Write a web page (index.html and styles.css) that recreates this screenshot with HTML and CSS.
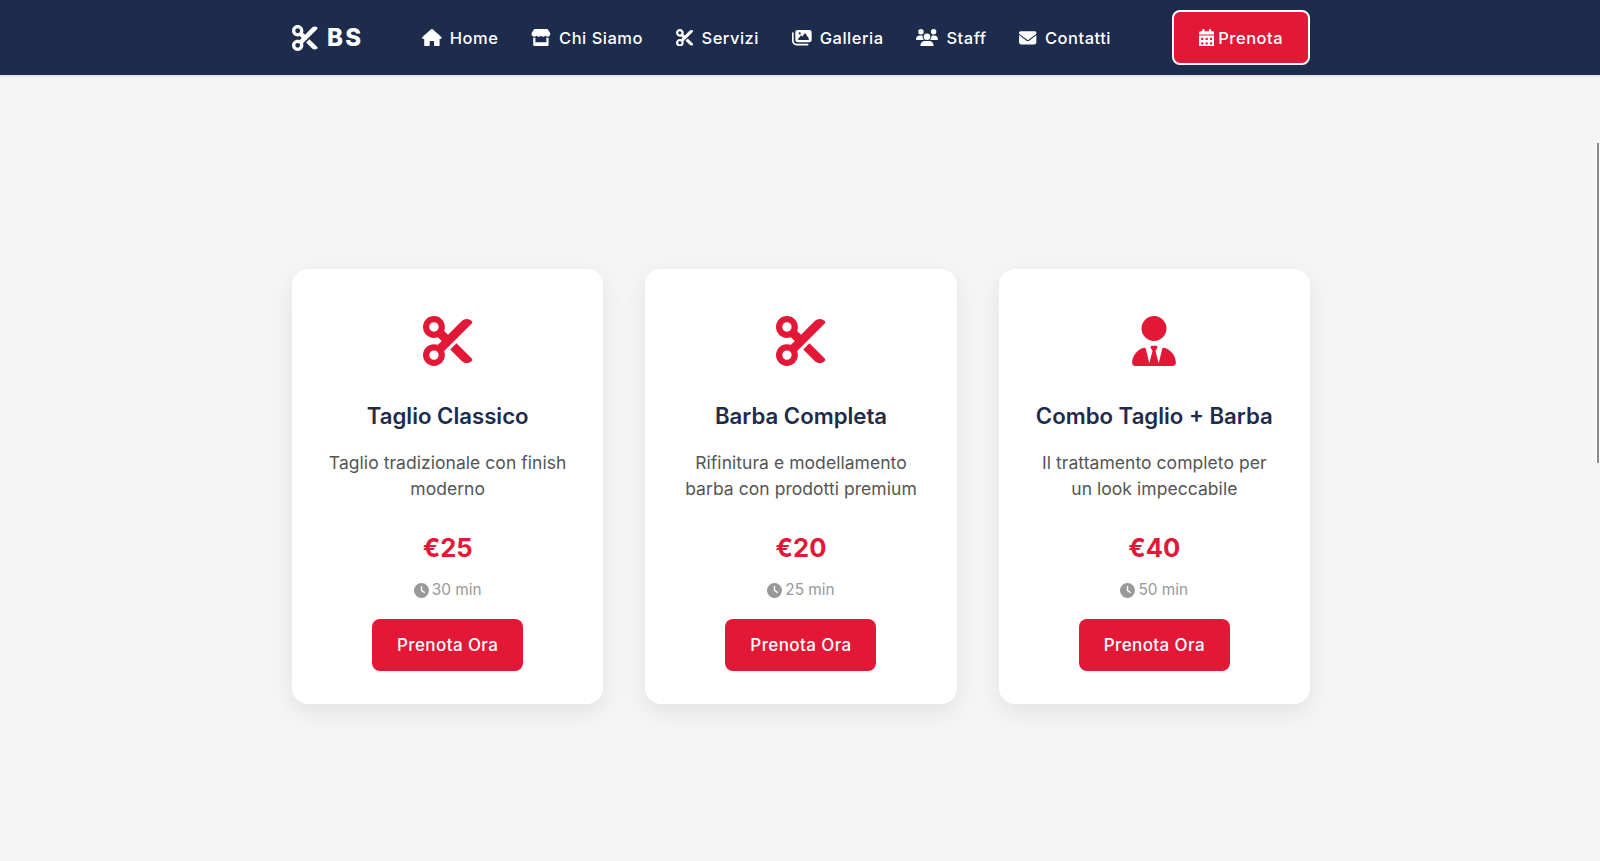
FILE: index.html
```html
<!DOCTYPE html>
<html lang="it">
<head>
  <meta charset="UTF-8">
  <title>BS Barber Shop</title>
  <link rel="stylesheet" href="styles.css">
</head>
<body>

  <svg class="sprite" xmlns="http://www.w3.org/2000/svg">
    <symbol id="i-cut" viewBox="0 0 512 512"><path d="M256 192l-39.5-39.5c4.9-12.6 7.5-26.2 7.5-40.5C224 50.1 173.9 0 112 0S0 50.1 0 112s50.1 112 112 112c14.3 0 27.9-2.7 40.5-7.5L192 256l-39.5 39.5c-12.6-4.9-26.2-7.5-40.5-7.5C50.1 288 0 338.1 0 400s50.1 112 112 112s112-50.1 112-112c0-14.3-2.7-27.9-7.5-40.5L499.2 76.8c7.1-7.1 7.1-18.5 0-25.6c-28.3-28.3-74.1-28.3-102.4 0L256 192zm22.6 150.6L396.8 460.8c28.3 28.3 74.1 28.3 102.4 0c7.1-7.1 7.1-18.5 0-25.6L342.6 278.6l-64 64zM64 112a48 48 0 1 1 96 0 48 48 0 1 1 -96 0zm48 240a48 48 0 1 1 0 96 48 48 0 1 1 0-96z"/></symbol>
    <symbol id="i-home" viewBox="0 0 576 512"><path d="M575.8 255.5c0 18-15 32.1-32 32.1h-32l.7 160.2c0 2.7-.2 5.4-.5 8.1V472c0 22.1-17.9 40-40 40H456c-1.1 0-2.2 0-3.3-.1c-1.4 .1-2.8 .1-4.2 .1H416 392c-22.1 0-40-17.9-40-40V448 384c0-17.7-14.3-32-32-32H256c-17.7 0-32 14.3-32 32v64 24c0 22.1-17.9 40-40 40H160 128.1c-1.5 0-3-.1-4.5-.2c-1.2 .1-2.4 .2-3.6 .2H104c-22.1 0-40-17.9-40-40V360c0-.9 0-1.9 .1-2.8V287.6H32c-18 0-32-14-32-32.1c0-9 3-17 10-24L266.4 8c7-7 15-8 22-8s15 2 21 7L564.8 231.5c8 7 12 15 11 24z"/></symbol>
    <symbol id="i-store" viewBox="0 0 576 512"><path d="M547.6 103.8L490.3 13.1C485.2 5 476.1 0 466.4 0H109.6C99.9 0 90.8 5 85.7 13.1L28.3 103.8c-29.6 46.8-3.4 111.9 51.9 119.4c4 .5 8.1 .8 12.1 .8c26.1 0 49.3-11.4 65.2-29c15.9 17.6 39.1 29 65.2 29c26.1 0 49.3-11.4 65.2-29c15.9 17.6 39.1 29 65.2 29c26.2 0 49.3-11.4 65.2-29c16 17.6 39.1 29 65.2 29c4.1 0 8.1-.3 12.1-.8c55.5-7.4 81.8-72.5 52.1-119.4zM499.7 254.9l-.1 0c-5.3 .7-10.7 1.1-16.2 1.1c-12.4 0-24.3-1.9-35.4-5.3V384H128V250.6c-11.2 3.5-23.2 5.4-35.6 5.4c-5.5 0-11-.4-16.3-1.1l-.1 0c-4.1-.6-8.1-1.3-12-2.3V384v64c0 35.3 28.7 64 64 64H448c35.3 0 64-28.7 64-64V384 252.6c-4 1-8 1.8-12.3 2.3z"/></symbol>
    <symbol id="i-images" viewBox="0 0 576 512"><path d="M160 32c-35.3 0-64 28.7-64 64V320c0 35.3 28.7 64 64 64H512c35.3 0 64-28.7 64-64V96c0-35.3-28.7-64-64-64H160zM396 138.7l96 144c4.9 7.4 5.4 16.8 1.2 24.6S480.9 320 472 320H328 280 200c-9.2 0-17.6-5.3-21.6-13.6s-2.9-18.2 2.9-25.4l64-80c4.6-5.7 11.4-9 18.7-9s14.2 3.3 18.7 9l17.3 21.6 56-84C360.5 132 368 128 376 128s15.5 4 20 10.7zM192 128a32 32 0 1 1 64 0 32 32 0 1 1 -64 0zM48 120c0-13.3-10.7-24-24-24S0 106.7 0 120V344c0 75.1 60.9 136 136 136H456c13.3 0 24-10.7 24-24s-10.7-24-24-24H136c-48.6 0-88-39.4-88-88V120z"/></symbol>
    <symbol id="i-users" viewBox="0 0 640 512"><path d="M144 0a80 80 0 1 1 0 160A80 80 0 1 1 144 0zM512 0a80 80 0 1 1 0 160A80 80 0 1 1 512 0zM0 298.7C0 239.8 47.8 192 106.7 192h42.7c15.9 0 31 3.5 44.6 9.7c-1.3 7.2-1.9 14.7-1.9 22.3c0 38.2 16.8 72.5 43.3 96c-.2 0-.4 0-.7 0H21.3C9.6 320 0 310.4 0 298.7zM405.3 320c-.2 0-.4 0-.7 0c26.6-23.5 43.3-57.8 43.3-96c0-7.6-.7-15-1.9-22.3c13.6-6.3 28.7-9.7 44.6-9.7h42.7C592.2 192 640 239.8 640 298.7c0 11.8-9.6 21.3-21.3 21.3H405.3zM224 224a96 96 0 1 1 192 0 96 96 0 1 1 -192 0zM128 485.3C128 411.7 187.7 352 261.3 352H378.7C452.3 352 512 411.7 512 485.3c0 14.7-11.9 26.7-26.7 26.7H154.7c-14.7 0-26.7-11.9-26.7-26.7z"/></symbol>
    <symbol id="i-envelope" viewBox="0 0 512 512"><path d="M48 64C21.5 64 0 85.5 0 112c0 15.1 7.1 29.3 19.2 38.4L236.8 313.6c11.4 8.5 27 8.5 38.4 0L492.8 150.4c12.1-9.1 19.2-23.3 19.2-38.4c0-26.5-21.5-48-48-48H48zM0 176V384c0 35.3 28.7 64 64 64H448c35.3 0 64-28.7 64-64V176L294.4 339.2c-22.8 17.1-54 17.1-76.8 0L0 176z"/></symbol>
    <symbol id="i-calendar" viewBox="0 0 448 512"><path d="M128 0c17.7 0 32 14.3 32 32V64H288V32c0-17.7 14.3-32 32-32s32 14.3 32 32V64h48c26.5 0 48 21.5 48 48v48H0V112C0 85.5 21.5 64 48 64H96V32c0-17.7 14.3-32 32-32zM0 192H448V464c0 26.5-21.5 48-48 48H48c-26.5 0-48-21.5-48-48V192zm64 80v32c0 8.8 7.2 16 16 16h32c8.8 0 16-7.2 16-16V272c0-8.8-7.2-16-16-16H80c-8.8 0-16 7.2-16 16zm128 0v32c0 8.8 7.2 16 16 16h32c8.8 0 16-7.2 16-16V272c0-8.8-7.2-16-16-16H208c-8.8 0-16 7.2-16 16zm144-16c-8.8 0-16 7.2-16 16v32c0 8.8 7.2 16 16 16h32c8.8 0 16-7.2 16-16V272c0-8.8-7.2-16-16-16H336zM64 400v32c0 8.8 7.2 16 16 16h32c8.8 0 16-7.2 16-16V400c0-8.8-7.2-16-16-16H80c-8.8 0-16 7.2-16 16zm144-16c-8.8 0-16 7.2-16 16v32c0 8.8 7.2 16 16 16h32c8.8 0 16-7.2 16-16V400c0-8.8-7.2-16-16-16H208zm112 16v32c0 8.8 7.2 16 16 16h32c8.8 0 16-7.2 16-16V400c0-8.8-7.2-16-16-16H336c-8.8 0-16 7.2-16 16z"/></symbol>
    <symbol id="i-clock" viewBox="0 0 512 512"><path d="M256 0a256 256 0 1 1 0 512A256 256 0 1 1 256 0zM232 120V256c0 8 4 15.5 10.7 20l96 64c11 7.4 25.9 4.4 33.3-6.7s4.4-25.9-6.7-33.3L280 243.2V120c0-13.3-10.7-24-24-24s-24 10.7-24 24z"/></symbol>
    <symbol id="i-tie" viewBox="0 0 448 512"><path d="M96 128a128 128 0 1 0 256 0A128 128 0 1 0 96 128zm94.5 200.2l18.6 31L175.8 483.1l-36-146.9c-2-8.1-9.8-13.4-17.9-11.3C51.9 342.4 0 405.8 0 481.3c0 17 13.8 30.7 30.7 30.7H162.5c0 0 0 0 .1 0H168 280h5.5c0 0 0 0 .1 0H417.3c17 0 30.7-13.8 30.7-30.7c0-75.5-51.9-138.9-121.9-156.4c-8.1-2-15.9 3.3-17.9 11.3l-36 146.9L238.9 359.2l18.6-31c6.4-10.7-1.3-24.2-13.7-24.2H224 204.3c-12.4 0-20.1 13.6-13.7 24.2z"/></symbol>
  </svg>

  <header class="navbar">
    <div class="wrap nav-inner">
      <a class="logo" href="#"><svg class="logo-icon"><use href="#i-cut"/></svg>BS</a>
      <nav class="nav-links">
        <a href="#"><svg class="nav-icon wide"><use href="#i-home"/></svg>Home</a>
        <a href="#"><svg class="nav-icon wide"><use href="#i-store"/></svg>Chi Siamo</a>
        <a href="#"><svg class="nav-icon"><use href="#i-cut"/></svg>Servizi</a>
        <a href="#"><svg class="nav-icon wide"><use href="#i-images"/></svg>Galleria</a>
        <a href="#"><svg class="nav-icon wider"><use href="#i-users"/></svg>Staff</a>
        <a href="#"><svg class="nav-icon"><use href="#i-envelope"/></svg>Contatti</a>
      </nav>
      <a class="nav-cta" href="#"><svg class="cta-icon"><use href="#i-calendar"/></svg>Prenota</a>
    </div>
  </header>

  <main class="services">
    <div class="wrap service-grid">
      <article class="card">
        <svg class="card-icon"><use href="#i-cut"/></svg>
        <h3>Taglio Classico</h3>
        <p class="desc">Taglio tradizionale con finish moderno</p>
        <div class="price">€25</div>
        <div class="duration"><svg class="clock"><use href="#i-clock"/></svg>30 min</div>
        <a class="book" href="#">Prenota Ora</a>
      </article>
      <article class="card">
        <svg class="card-icon"><use href="#i-cut"/></svg>
        <h3>Barba Completa</h3>
        <p class="desc">Rifinitura e modellamento barba con prodotti premium</p>
        <div class="price">€20</div>
        <div class="duration"><svg class="clock"><use href="#i-clock"/></svg>25 min</div>
        <a class="book" href="#">Prenota Ora</a>
      </article>
      <article class="card">
        <svg class="card-icon"><use href="#i-tie"/></svg>
        <h3>Combo Taglio + Barba</h3>
        <p class="desc">Il trattamento completo per un look impeccabile</p>
        <div class="price">€40</div>
        <div class="duration"><svg class="clock"><use href="#i-clock"/></svg>50 min</div>
        <a class="book" href="#">Prenota Ora</a>
      </article>
    </div>
  </main>

  <div class="scroll-thumb"></div>

</body>
</html>
```

FILE: styles.css
```css
* {
  margin: 0;
  padding: 0;
  box-sizing: border-box;
}

body {
  font-family: 'Inter', 'Open Sans', sans-serif;
  background: #f5f5f5;
  height: 100vh;
  overflow: hidden;
  position: relative;
}

a {
  text-decoration: none;
  color: inherit;
}

.sprite {
  display: none;
}

.wrap {
  width: 1018px;
  margin-left: 292px;
}

/* Navbar */
.navbar {
  background: #1d2b4d;
  height: 75px;
  box-shadow: 0 1px 3px rgba(0, 0, 0, 0.12);
  color: #fff;
}

.nav-inner {
  height: 100%;
  display: flex;
  align-items: center;
}

.logo {
  width: 130px;
  display: flex;
  align-items: center;
  gap: 9px;
  font-size: 24px;
  font-weight: 800;
  letter-spacing: 2.2px;
}

.logo-icon {
  width: 26px;
  height: 26px;
  fill: #fff;
}

.nav-links {
  width: 689px;
  display: flex;
  justify-content: space-between;
}

.nav-links a {
  display: flex;
  align-items: center;
  gap: 8px;
  font-size: 16.5px;
  font-weight: 500;
  letter-spacing: 0.5px;
}

.nav-icon {
  width: 17.6px;
  height: 17.6px;
  fill: #fff;
}

.nav-icon.wide {
  width: 19.8px;
}

.nav-icon.wider {
  width: 22px;
}

.nav-cta {
  width: 138px;
  height: 55px;
  margin-left: auto;
  display: flex;
  align-items: center;
  justify-content: center;
  gap: 4px;
  background: #e31837;
  border: 2px solid #fff;
  border-radius: 8px;
  font-size: 16.5px;
  font-weight: 500;
  letter-spacing: 0.5px;
}

.cta-icon {
  width: 15.4px;
  height: 17.6px;
  fill: #fff;
}

/* Service cards */
.services {
  padding-top: 194px;
}

.service-grid {
  display: grid;
  grid-template-columns: repeat(3, 1fr);
  gap: 42px;
}

.card {
  height: 435px;
  padding: 47px 36px 0;
  display: flex;
  flex-direction: column;
  align-items: center;
  text-align: center;
  background: #fff;
  border-radius: 16px;
  box-shadow: 0 8px 25px rgba(0, 0, 0, 0.08);
}

.card-icon {
  width: 50px;
  height: 50px;
  fill: #e31837;
  flex-shrink: 0;
}

.card h3 {
  margin-top: 34.5px;
  font-size: 22.2px;
  line-height: 30px;
  font-weight: 600;
  color: #1d2b4d;
}

.desc {
  margin-top: 19px;
  font-size: 17.5px;
  letter-spacing: 0.05px;
  line-height: 26.5px;
  color: #555;
}

.price {
  margin-top: 26.5px;
  font-size: 25.6px;
  line-height: 38px;
  font-weight: 700;
  color: #e31837;
}

.duration {
  margin-top: 12px;
  display: flex;
  align-items: center;
  gap: 3px;
  font-size: 15.4px;
  line-height: 22px;
  color: #999;
}

.clock {
  width: 15px;
  height: 15px;
  fill: #999;
}

.book {
  margin-top: 17.5px;
  width: 151px;
  height: 52px;
  display: flex;
  align-items: center;
  justify-content: center;
  background: #e31837;
  border-radius: 8px;
  color: #fff;
  font-size: 17px;
  font-weight: 500;
  letter-spacing: 0.4px;
}

/* thumb of the overlay scrollbar */
.scroll-thumb {
  position: absolute;
  top: 143px;
  right: 1px;
  width: 2px;
  height: 320px;
  background: #8a8a8a;
  box-shadow: 0 0 0 1px rgba(255, 255, 255, 0.7);
}
```
